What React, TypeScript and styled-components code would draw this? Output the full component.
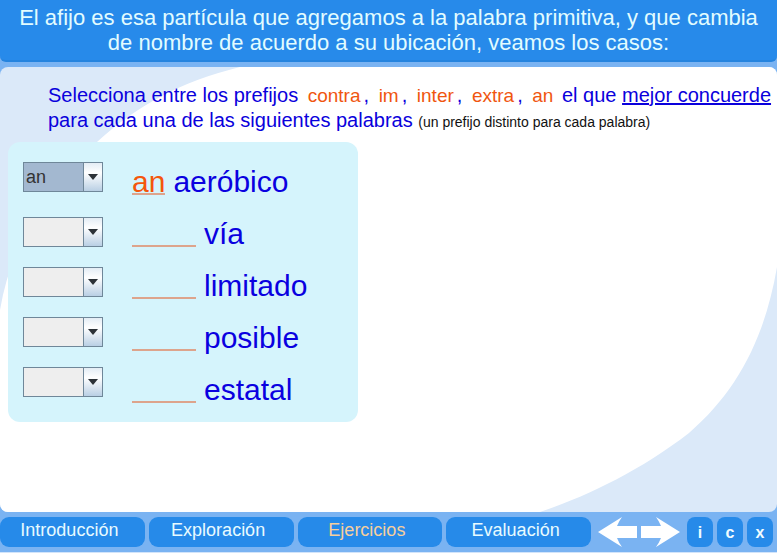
import React, { useState } from "react";
import styled, { createGlobalStyle } from "styled-components";

const GlobalStyle = createGlobalStyle`
  * { box-sizing: border-box; }
  body { margin: 0; background: #7ab3f2; font-family: "Liberation Sans", Arial, sans-serif; }
  button, select { font-family: inherit; }
`;

const Page = styled.div`
  display: flex;
  flex-direction: column;
  min-height: 100vh;
`;

const Header = styled.header`
  background: #278aea;
  border-bottom: 2px solid #2584df;
  border-radius: 0 0 6px 6px;
  padding: 5px 12px;
  margin-bottom: 5px;
`;

const Title = styled.h1`
  margin: 0 auto;
  max-width: 750px;
  color: #e2fcff;
  font-size: 22px;
  line-height: 25px;
  font-weight: 400;
  text-align: center;
`;

const Stage = styled.main`
  position: relative;
  flex: 1;
  display: flex;
  flex-direction: column;
  align-items: flex-start;
  padding: 16px 0 90px;
  background: #dbe9f9;
  border-radius: 8px;
  overflow: hidden;
`;

const Backdrop = styled.svg`
  position: absolute;
  inset: 0;
  width: 100%;
  height: 100%;
`;

const Instructions = styled.p`
  position: relative;
  margin: 0 0 9px 48px;
  color: #0a00dc;
  font-size: 20px;
  line-height: 25px;
`;

const Prefix = styled.span`
  color: #f0560f;
  margin: 0 3px 0 4px;
  font-size: 19px;
  line-height: 1;
`;

const Note = styled.small`
  color: #111;
  font-size: 14px;
  line-height: 1;
`;

const Panel = styled.section`
  position: relative;
  display: flex;
  gap: 29px;
  width: 350px;
  margin-left: 8px;
  padding: 14px 15px 6px;
  background: #d5f4fc;
  border-radius: 12px;
`;

const Choices = styled.div`
  display: grid;
  grid-template-rows: 55px repeat(3, 50px) 30px;
  align-content: start;
  padding-top: 6px;
`;

const SelectBox = styled.div`
  position: relative;
  width: 80px;
  height: 30px;
`;

const Select = styled.select<{ $filled: boolean }>`
  appearance: none;
  width: 100%;
  height: 100%;
  padding: 0 20px 0 2px;
  border: 1px solid #6f8799;
  border-radius: 0;
  background: ${(p) => (p.$filled ? "#a3b8d0" : "#eeeeee")};
  color: #333;
  font-size: 18px;
`;

const SelectArrow = styled.span`
  position: absolute;
  top: 1px;
  right: 1px;
  bottom: 1px;
  width: 19px;
  display: flex;
  align-items: center;
  justify-content: center;
  border-left: 1px solid #6f8799;
  background: linear-gradient(#e4edf5, #ffffff 35%, #b9cfe4);
  pointer-events: none;
`;

const Words = styled.div`
  display: flex;
  flex-direction: column;
`;

const Word = styled.div`
  display: flex;
  align-items: center;
  gap: 8px;
  height: 52px;
  color: #0a00e0;
  font-size: 30px;
  line-height: 32px;
`;

const Blank = styled.span<{ $filled: boolean }>`
  min-width: ${(p) => (p.$filled ? "32px" : "64px")};
  height: 26px;
  line-height: 26px;
  color: #f4560c;
  border-bottom: 2px solid #dda48c;
`;

const Footer = styled.footer`
  display: flex;
  align-items: center;
  gap: 7px;
  padding: 5px 4px 5px 0;
  border-bottom: 1px solid #d2e4fa;
`;

const Tabs = styled.nav`
  flex: 1;
  display: flex;
  gap: 4px;
`;

const Tab = styled.button<{ $active: boolean }>`
  flex: 1;
  height: 30px;
  padding: 0 6px 4px 0;
  border: 0;
  border-radius: 9px;
  background: #268ae9;
  color: ${(p) => (p.$active ? "#f7cf9c" : "#e8fbff")};
  font-size: 18px;
`;

const Group = styled.div`
  display: flex;
  gap: 4px;
`;

const ArrowButton = styled.button`
  display: flex;
  padding: 0;
  border: 0;
  background: none;
`;

const SmallButton = styled.button`
  width: 26px;
  height: 30px;
  padding: 2px 0 0;
  border: 0;
  border-radius: 8px;
  background: #268ae9;
  color: #f0fcff;
  font-size: 16px;
  font-weight: 700;
`;

const prefixes = ["contra", "im", "inter", "extra", "an"];
const words = ["aeróbico", "vía", "limitado", "posible", "estatal"];
const tabs = ["Introducción", "Exploración", "Ejercicios", "Evaluación"];

export default function App() {
  const [answers, setAnswers] = useState(["an", "", "", "", ""]);
  const [tab, setTab] = useState("Ejercicios");

  const choose = (index: number, value: string) =>
    setAnswers(answers.map((a, i) => (i === index ? value : a)));

  return (
    <Page>
      <GlobalStyle />
      <Header>
        <Title>
          El afijo es esa partícula que agregamos a la palabra primitiva, y que cambia de nombre de
          acuerdo a su ubicación, veamos los casos:
        </Title>
      </Header>
      <Stage>
        <Backdrop viewBox="0 0 777 445" preserveAspectRatio="none" aria-hidden="true">
          <path
            d="M240 0C180 15 138 38 97 75C48 119 12 173 0 243V445H540C585 430 640 404 689 366C738 324 765 270 777 200V0Z"
            fill="#fff"
          />
        </Backdrop>
        <Instructions>
          Selecciona entre los prefijos{" "}
          {prefixes.map((p, i) => (
            <React.Fragment key={p}>
              <Prefix>{p}</Prefix>
              {i < prefixes.length - 1 ? ", " : " "}
            </React.Fragment>
          ))}
          el que <u>mejor concuerde</u>
          <br />
          para cada una de las siguientes palabras <Note>(un prefijo distinto para cada palabra)</Note>
        </Instructions>
        <Panel>
          <Choices>
            {words.map((word, i) => (
              <SelectBox key={word}>
                <Select
                  aria-label={`Prefijo para ${word}`}
                  $filled={answers[i] !== ""}
                  value={answers[i]}
                  onChange={(e) => choose(i, e.target.value)}
                >
                  <option value="" />
                  {prefixes.map((p) => (
                    <option key={p}>{p}</option>
                  ))}
                </Select>
                <SelectArrow>
                  <svg width="10" height="6" viewBox="0 0 10 6" aria-hidden="true">
                    <path d="M0 0H10L5 6Z" fill="#2c3238" />
                  </svg>
                </SelectArrow>
              </SelectBox>
            ))}
          </Choices>
          <Words>
            {words.map((word, i) => (
              <Word key={word}>
                <Blank $filled={answers[i] !== ""}>{answers[i]}</Blank>
                <span>{word}</span>
              </Word>
            ))}
          </Words>
        </Panel>
      </Stage>
      <Footer>
        <Tabs>
          {tabs.map((t) => (
            <Tab key={t} $active={t === tab} onClick={() => setTab(t)}>
              {t}
            </Tab>
          ))}
        </Tabs>
        <Group>
          <ArrowButton aria-label="Anterior">
            <svg width="39" height="30" viewBox="0 0 39 30" aria-hidden="true">
              <path d="M0 15L24 0Q21 4 19 9H39V21H19Q21 26 24 30Z" fill="#fff" />
            </svg>
          </ArrowButton>
          <ArrowButton aria-label="Siguiente">
            <svg width="39" height="30" viewBox="0 0 39 30" aria-hidden="true">
              <path d="M39 15L15 0Q18 4 20 9H0V21H20Q18 26 15 30Z" fill="#fff" />
            </svg>
          </ArrowButton>
        </Group>
        <Group>
          <SmallButton aria-label="Información">i</SmallButton>
          <SmallButton aria-label="Créditos">c</SmallButton>
          <SmallButton aria-label="Cerrar">x</SmallButton>
        </Group>
      </Footer>
    </Page>
  );
}
